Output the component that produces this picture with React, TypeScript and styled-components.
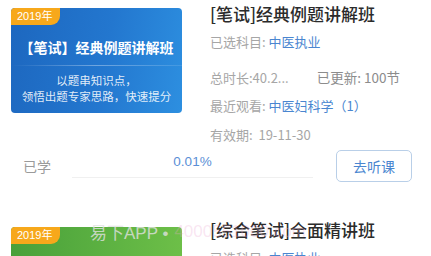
import React from 'react'
import styled, { createGlobalStyle } from 'styled-components'

const GlobalStyle = createGlobalStyle`
    html, body {
        margin: 0;
        padding: 0;
        background: #ffffff;
        font-family: "Noto Sans CJK SC", "Noto Sans", sans-serif;
        overflow: hidden;
    }
`

const Page = styled.div`
    position: relative;
    width: 431px;
    height: 256px;
    overflow: hidden;
`

const Item = styled.div<{ $top: number }>`
    padding: 0 11px;
    margin-top: ${({ $top }) => $top}px;
`

const TopRow = styled.div`
    display: grid;
    grid-template-columns: 171px 1fr;
    column-gap: 28px;
`

const Cover = styled.div<{ $green?: boolean }>`
    position: relative;
    height: 105px;
    border-radius: 4px;
    overflow: hidden;
    background: ${({ $green }) => $green
        ? 'linear-gradient(90deg, #48a03a 0%, #6dbf48 100%)'
        : 'linear-gradient(100deg, #1d67bf 0%, #2377cf 55%, #2d8fe0 100%)'};
    display: flex;
    flex-direction: column;
    align-items: center;
    color: #ffffff;
`

const Badge = styled.div`
    position: absolute;
    left: 0;
    top: 0;
    height: 17px;
    padding: 0 8px 0 6px;
    background: #f7a81b;
    border-radius: 0 0 9px 0;
    font-family: "Liberation Sans", "Noto Sans CJK SC", sans-serif;
    font-size: 11px;
    line-height: 17px;
    color: #ffffff;
`

const CoverTitle = styled.div`
    margin-top: 29px;
    font-size: 14px;
    font-weight: 700;
    line-height: 20px;
`

const CoverLine = styled.div`
    margin-top: 8px;
    width: 100%;
    height: 1px;
    background: linear-gradient(90deg, rgba(255,255,255,0) 0%, rgba(255,255,255,0.35) 50%, rgba(255,255,255,0.1) 100%);
`

const CoverText = styled.div`
    margin-top: 6px;
    font-size: 11.5px;
    line-height: 16px;
    text-align: center;
    color: rgba(255,255,255,0.88);
`

const Info = styled.div<{ $shift: number }>`
    margin-top: ${({ $shift }) => $shift}px;
    display: flex;
    flex-direction: column;
`

const Title = styled.div`
    font-size: 17px;
    font-weight: 500;
    line-height: 28px;
    color: #2b2b2b;
    white-space: nowrap;
`

const Line = styled.div<{ $gap: number }>`
    margin-top: ${({ $gap }) => $gap}px;
    font-size: 13px;
    line-height: 20px;
    color: #a6a6a6;
    white-space: pre;
`

const Blue = styled.span`
    color: #4a86d0;
`

const Updated = styled.span`
    display: inline-block;
    margin-left: 28px;
    color: #8c8c8c;
    font-size: 13.5px;
`

const Progress = styled.div`
    display: flex;
    align-items: center;
    margin-top: 5px;
    padding-left: 12px;
`

const Learned = styled.div`
    width: 49px;
    font-size: 14px;
    color: #9a9a9a;
`

const Track = styled.div`
    align-self: flex-start;
    width: 241px;
    height: 28px;
    border-bottom: 1px solid #f0f0f0;
    text-align: center;
    font-family: "Liberation Sans", "Noto Sans", sans-serif;
    font-size: 13.5px;
    line-height: 24px;
    color: #5a8fd6;
    box-sizing: border-box;
`

const Button = styled.button`
    margin-left: 23px;
    width: 76px;
    height: 32px;
    border: 1px solid #b9cfe8;
    border-radius: 5px;
    background: #ffffff;
    font-family: "Noto Sans CJK SC", sans-serif;
    font-size: 14px;
    color: #4a86d0;
    padding: 0;
`

const Watermark = styled.div`
    position: absolute;
    left: 90px;
    top: 219px;
    display: flex;
    align-items: center;
    gap: 6px;
    font-family: "Liberation Sans", "Noto Sans CJK SC", sans-serif;
    white-space: nowrap;
    pointer-events: none;
`

const MarkName = styled.span`
    font-size: 17px;
    color: rgba(225, 225, 225, 0.8);
`

const MarkSite = styled.span`
    font-size: 17px;
    color: rgba(236, 170, 210, 0.3);
`

export default function App() {
    return (
        <Page>
            <GlobalStyle />
            <Item $top={8}>
                <TopRow>
                    <Cover>
                        <Badge>2019年</Badge>
                        <CoverTitle>【笔试】经典例题讲解班</CoverTitle>
                        <CoverLine />
                        <CoverText>以题串知识点，<br />领悟出题专家思路，快速提分</CoverText>
                    </Cover>
                    <Info $shift={-8}>
                        <Title>[笔试]经典例题讲解班</Title>
                        <Line $gap={4}>已选科目: <Blue>中医执业</Blue></Line>
                        <Line $gap={15}>总时长:40.2...<Updated>已更新: 100节</Updated></Line>
                        <Line $gap={8}>最近观看: <Blue>中医妇科学（1）</Blue></Line>
                        <Line $gap={9}>有效期:  19-11-30</Line>
                    </Info>
                </TopRow>
                <Progress>
                    <Learned>已学</Learned>
                    <Track>0.01%</Track>
                    <Button>去听课</Button>
                </Progress>
            </Item>
            <Item $top={45}>
                <TopRow>
                    <Cover $green>
                        <Badge>2019年</Badge>
                    </Cover>
                    <Info $shift={-11}>
                        <Title>[综合笔试]全面精讲班</Title>
                        <Line $gap={4}>已选科目: <Blue>中医执业</Blue></Line>
                    </Info>
                </TopRow>
            </Item>
            <Watermark>
                <MarkName>易下APP •</MarkName>
                <MarkSite>4000551000.com</MarkSite>
            </Watermark>
        </Page>
    )
}
